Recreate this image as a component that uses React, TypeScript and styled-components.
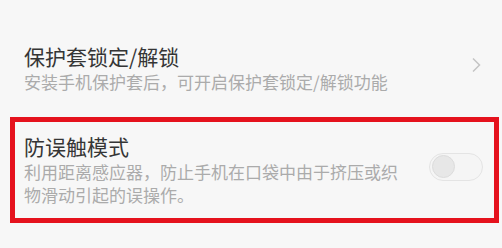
import React from "react";
import styled, { createGlobalStyle } from "styled-components";

const GlobalStyle = createGlobalStyle`
  html, body {
    margin: 0;
    padding: 0;
    background: #f7f7f7;
  }
  body {
    font-family: "Noto Sans CJK SC", "Noto Sans", sans-serif;
  }
`;

const Page = styled.div`
  width: 502px;
  height: 248px;
  overflow: hidden;
  background: #f7f7f7;
  padding-top: 43px;
  box-sizing: border-box;
`;

const Row = styled.div`
  display: flex;
  align-items: center;
  padding: 0 21px 0 24px;
`;

const Highlight = styled.div`
  display: flex;
  align-items: center;
  margin: 24px 3px 0 10px;
  border: 5px solid #e5121d;
  padding: 11px 11px 12px 9px;
`;

const TextBlock = styled.div`
  flex: 1;
  display: flex;
  flex-direction: column;
`;

const Title = styled.div`
  font-size: 21px;
  line-height: 27px;
  color: #353535;
`;

const Summary = styled.div`
  font-size: 17px;
  line-height: 23px;
  color: #ababab;
`;

const Chevron = styled.svg`
  width: 10px;
  height: 16px;
  margin-top: -6px;
`;

const Switch = styled.div<{ $on?: boolean }>`
  width: 54px;
  height: 28px;
  box-sizing: border-box;
  border-radius: 14px;
  border: 1.5px solid #e4e4e4;
  background: ${(p) => (p.$on ? "#4a9df8" : "#f5f5f5")};
  display: flex;
  align-items: center;
  padding: 0 2px;
  margin-top: -6px;
`;

const Knob = styled.div`
  width: 21px;
  height: 21px;
  border-radius: 50%;
  background: #e7e7e7;
  border: 1px solid #dcdcdc;
`;

const App = () => {
  return (
    <Page>
      <GlobalStyle />
      <Row>
        <TextBlock>
          <Title>保护套锁定/解锁</Title>
          <Summary>安装手机保护套后，可开启保护套锁定/解锁功能</Summary>
        </TextBlock>
        <Chevron viewBox="0 0 10 16">
          <polyline
            points="2,1.5 8.5,8 2,14.5"
            fill="none"
            stroke="#c4c4c4"
            strokeWidth="1.5"
          />
        </Chevron>
      </Row>
      <Highlight>
        <TextBlock>
          <Title>防误触模式</Title>
          <Summary>
            利用距离感应器，防止手机在口袋中由于挤压或织
            <br />
            物滑动引起的误操作。
          </Summary>
        </TextBlock>
        <Switch>
          <Knob />
        </Switch>
      </Highlight>
    </Page>
  );
};

export default App;
